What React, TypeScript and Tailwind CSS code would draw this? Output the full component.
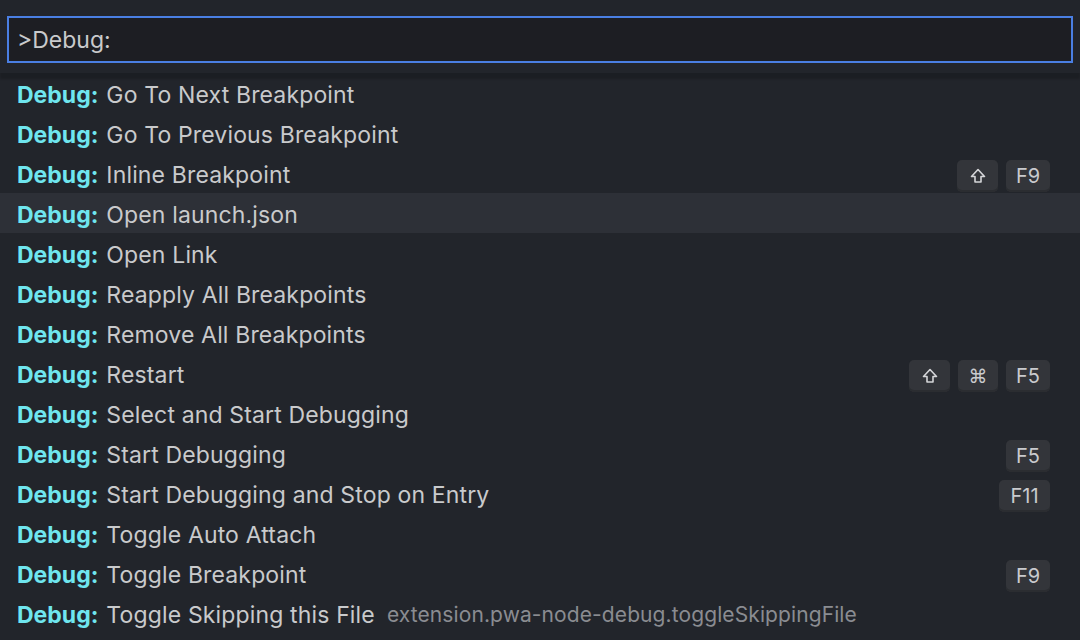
import React from 'react';

type Command = {
  label: string;
  keys?: string[];
  detail?: string;
};

const commands: Command[] = [
  { label: 'Go To Next Breakpoint' },
  { label: 'Go To Previous Breakpoint' },
  { label: 'Inline Breakpoint', keys: ['shift', 'F9'] },
  { label: 'Open launch.json' },
  { label: 'Open Link' },
  { label: 'Reapply All Breakpoints' },
  { label: 'Remove All Breakpoints' },
  { label: 'Restart', keys: ['shift', 'cmd', 'F5'] },
  { label: 'Select and Start Debugging' },
  { label: 'Start Debugging', keys: ['F5'] },
  { label: 'Start Debugging and Stop on Entry', keys: ['F11'] },
  { label: 'Toggle Auto Attach' },
  { label: 'Toggle Breakpoint', keys: ['F9'] },
  { label: 'Toggle Skipping this File', detail: 'extension.pwa-node-debug.toggleSkippingFile' },
];

const ACTIVE = 3;

function ShiftIcon() {
  return (
    <svg width="18" height="18" viewBox="0 0 18 18" fill="none">
      <path
        d="M9 2.5 L2.5 9.5 H6 V15 H12 V9.5 H15.5 Z"
        stroke="#d4d5d8"
        strokeWidth="1.6"
        strokeLinejoin="round"
      />
    </svg>
  );
}

function Key({ k }: { k: string }) {
  const width = k === 'F11' ? 'w-[51px]' : k === 'cmd' ? 'w-[40px]' : k === 'shift' ? 'w-[41px]' : 'w-[44px]';
  return (
    <span
      className={`${width} h-[32px] mt-[2px] flex items-center justify-center rounded-[5px] bg-[#33353a] shadow-[inset_0_-2px_0_#2b2d31] text-[20px] text-[#c9cacd]`}
    >
      {k === 'shift' ? (
        <ShiftIcon />
      ) : k === 'cmd' ? (
        <span className="text-[19px] font-['DejaVu_Sans',sans-serif]">⌘</span>
      ) : (
        k
      )}
    </span>
  );
}

export default function App() {
  return (
    <div className="w-[1080px] h-[640px] overflow-hidden bg-[#22252b] font-['Inter','Noto_Sans',sans-serif]">
      {/* Quick input */}
      <div className="relative z-10 px-[7px] pt-[16px] pb-[10px] bg-[#22252b] shadow-[0_6px_2px_rgba(0,0,0,0.18)]">
        <div className="h-[47px] flex items-center border-2 border-[#4a7fe3] bg-[#1d1e23] pl-[8px] pt-[2px] text-[23px] text-[#c9cacc]">
          &gt;Debug:
        </div>
      </div>

      {/* Command list */}
      <div className="flex flex-col">
        {commands.map((c, i) => (
          <div
            key={c.label}
            className={`h-[40px] flex items-center pt-[4px] pl-[17px] pr-[30px] ${i === ACTIVE ? 'bg-[#2d3037]' : ''}`}
          >
            <span className="text-[23px] font-bold text-[#6fe6ef]">Debug:</span>
            <span className="ml-[8px] text-[23px] tracking-[0.15px] text-[#c9cacc]">{c.label}</span>
            {c.detail && <span className="ml-[12px] text-[21px] tracking-[0.1px] text-[#8a8c91]">{c.detail}</span>}
            <div className="ml-auto flex items-center gap-[8px]">
              {c.keys?.map((k) => (
                <Key key={k} k={k} />
              ))}
            </div>
          </div>
        ))}
      </div>
    </div>
  );
}
